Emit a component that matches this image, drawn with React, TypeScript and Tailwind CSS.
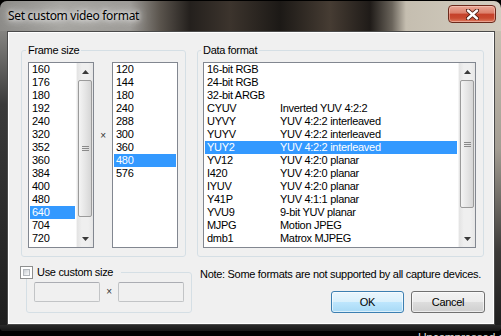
import React from 'react';

const widths = ['160', '176', '180', '192', '240', '320', '352', '360', '384', '400', '480', '640', '704', '720'];
const heights = ['120', '144', '180', '240', '288', '300', '360', '480', '576'];
const formats: [string, string][] = [
  ['16-bit RGB', ''],
  ['24-bit RGB', ''],
  ['32-bit ARGB', ''],
  ['CYUV', 'Inverted YUV 4:2:2'],
  ['UYVY', 'YUV 4:2:2 interleaved'],
  ['YUYV', 'YUV 4:2:2 interleaved'],
  ['YUY2', 'YUV 4:2:2 interleaved'],
  ['YV12', 'YUV 4:2:0 planar'],
  ['I420', 'YUV 4:2:0 planar'],
  ['IYUV', 'YUV 4:2:0 planar'],
  ['Y41P', 'YUV 4:1:1 planar'],
  ['YVU9', '9-bit YUV planar'],
  ['MJPG', 'Motion JPEG'],
  ['dmb1', 'Matrox MJPEG'],
];

function Arrow({ down }: { down?: boolean }) {
  return (
    <div className="h-[17px] flex items-center justify-center">
      <svg width="7" height="4" viewBox="0 0 7 4">
        {down ? (
          <polygon points="0,0 7,0 3.5,4" fill="#3a3a3a" />
        ) : (
          <polygon points="3.5,0 7,4 0,4" fill="#3a3a3a" />
        )}
      </svg>
    </div>
  );
}

function ScrollBar({ thumb }: { thumb: number }) {
  return (
    <div className="w-[17px] flex flex-col bg-[linear-gradient(to_right,#e3e3e3,#efefef_30%,#efefef_70%,#e6e6e6)] border-l border-[#f4f4f4]">
      <Arrow />
      <div className="flex-1 px-[1px]">
        <div
          className="rounded-[2px] border border-[#9b9b9b] bg-[linear-gradient(to_right,#f4f4f4,#e6e6e6_50%,#d6d6d6)] flex flex-col items-center justify-center gap-[1px]"
          style={{ height: thumb }}
        >
          <div className="w-[7px] h-[1px] bg-[#8a8a8a]" />
          <div className="w-[7px] h-[1px] bg-[#8a8a8a]" />
          <div className="w-[7px] h-[1px] bg-[#8a8a8a]" />
        </div>
      </div>
      <Arrow down />
    </div>
  );
}

function Row({ children, selected }: { children: React.ReactNode; selected?: boolean }) {
  return (
    <div
      className={
        'h-[13px] leading-[13px] pl-[2px] whitespace-nowrap flex ' +
        (selected ? 'bg-[#3399ff] text-white' : 'text-black')
      }
    >
      {children}
    </div>
  );
}

function Check() {
  return (
    <div className="w-[13px] h-[13px] border border-[#8e8f8f] bg-white p-[2px]">
      <div className="w-full h-full border border-[#b4b8bd] bg-[linear-gradient(135deg,#c9cdd2,#eceef0_70%,#f8f8f8)]" />
    </div>
  );
}

function Edit() {
  return (
    <div className="w-[66px] h-[20px] rounded-[2px] border border-[#c2c4c6] border-t-[#abadb3] bg-[#f0f0f0]" />
  );
}

function Times() {
  return <span className="text-[10px] leading-none text-[#333]">×</span>;
}

export default function App() {
  return (
    <div className="w-[501px] h-[336px] bg-black overflow-hidden flex flex-col font-['Liberation_Sans',Arial,sans-serif] text-[11px] tracking-[-0.3px]">
      <div className="mt-[1px] h-[330px] shrink-0 rounded-t-[7px] rounded-b-[4px] overflow-hidden flex flex-col bg-[#202020]">
        {/* Title bar */}
        <div className="h-[30px] shrink-0 flex items-start bg-[linear-gradient(to_right,#8c8b88_0px,#a5a4a0_60px,#9d9b97_130px,#5a544d_160px,#24201d_190px,#3c342d_230px,#1c1916_280px,#463c33_330px,#1f1b18_370px,#6a645b_392px,#c5beb0_406px,#d3cdc0_501px)]">
          <span className="pl-[8px] pt-[7px] text-[12px] leading-[16px] tracking-[-0.3px] text-black font-['Noto_Sans',sans-serif] [text-shadow:0_0_8px_rgba(255,255,255,0.9),0_0_14px_rgba(255,255,255,0.8),0_0_4px_rgba(255,255,255,0.9)]">
            Set custom video format
          </span>
          <div className="ml-auto mt-[4px] mr-[5px] w-[48px] h-[18px] rounded-[4px] border border-[#6b2a1c] bg-[linear-gradient(to_bottom,#eaa796_0%,#dc806b_45%,#c5412a_50%,#c94a30_75%,#dd7a5e_100%)] flex items-center justify-center shadow-[inset_0_0_0_1px_rgba(255,220,210,0.45)]">
            <svg width="13" height="11" viewBox="0 0 13 11">
              <path d="M2 1.5 L11 9.5 M11 1.5 L2 9.5" stroke="#4a1a10" strokeWidth="4.2" strokeLinecap="round" />
              <path d="M2 1.5 L11 9.5 M11 1.5 L2 9.5" stroke="#ffffff" strokeWidth="2.4" strokeLinecap="round" />
            </svg>
          </div>
        </div>

        {/* Frame sides + client */}
        <div className="flex flex-1 min-h-0">
          <div className="w-[7px] bg-[linear-gradient(to_bottom,#858481,#3a3a3a_25%,#1e1e1e)]" />
          <div className="w-[488px] h-[294px] border border-[#4a4a4a] bg-[#f0f0f0] shadow-[inset_1px_1px_0_#ffffff,inset_-1px_-1px_0_#ffffff] flex flex-col pt-[12px] pl-[13px] pr-[9px]">
            {/* Top row */}
            <div className="flex gap-[11px]">
              <fieldset className="w-[165px] border border-[#d5dfe5] rounded-[3px] pl-[6px] pt-[5px] pb-[8px]">
                <legend className="-ml-[2px] px-[2px] leading-[13px] text-black">Frame size</legend>
                <div className="flex">
                  <div className="w-[66px] h-[186px] border border-[#828790] bg-white flex">
                    <div className="flex-1 pl-[1px] pr-[1px]">
                      {widths.map((w) => (
                        <Row key={w} selected={w === '640'}>
                          {w}
                        </Row>
                      ))}
                    </div>
                    <ScrollBar thumb={137} />
                  </div>
                  <div className="w-[18px] flex justify-center pt-[69px]">
                    <Times />
                  </div>
                  <div className="w-[66px] h-[186px] border border-[#828790] bg-white pl-[1px] pr-[1px]">
                    {heights.map((h) => (
                      <Row key={h} selected={h === '480'}>
                        {h}
                      </Row>
                    ))}
                  </div>
                </div>
              </fieldset>
              <fieldset className="w-[287px] border border-[#d5dfe5] rounded-[3px] pl-[5px] pt-[5px] pb-[8px]">
                <legend className="-ml-[2px] px-[2px] leading-[13px] text-black">Data format</legend>
                <div className="w-[273px] h-[186px] border border-[#828790] bg-white flex">
                  <div className="flex-1 pl-[1px] pr-[1px]">
                    {formats.map(([a, b]) => (
                      <Row key={a} selected={a === 'YUY2'}>
                        <span className="w-[73px] shrink-0">{a}</span>
                        <span>{b}</span>
                      </Row>
                    ))}
                  </div>
                  <ScrollBar thumb={128} />
                </div>
              </fieldset>
            </div>

            {/* Bottom row */}
            <div className="flex mt-[9px]">
              <fieldset className="ml-[5px] w-[166px] border border-[#d5dfe5] rounded-[3px] pl-[7px] pt-[3px] pb-[10px]">
                <legend className="-ml-[14px] pr-[8px] flex items-center gap-[4px] h-[13px] leading-[13px] text-black">
                  <Check />
                  <span>Use custom size</span>
                </legend>
                <div className="flex items-center">
                  <Edit />
                  <div className="w-[18px] flex justify-center">
                    <Times />
                  </div>
                  <Edit />
                </div>
              </fieldset>
              <div className="flex-1 ml-[8px] pt-[2px] flex flex-col">
                <div className="leading-[13px] whitespace-nowrap text-black">
                  Note: Some formats are not supported by all capture devices.
                </div>
                <div className="mt-[10px] flex justify-end gap-[7px]">
                  <button className="w-[73px] h-[22px] rounded-[3px] border border-[#3c7fb1] bg-[linear-gradient(to_bottom,#eaf6fd_0%,#d9f0fc_50%,#bee6fd_50%,#a7d9f5_100%)] shadow-[inset_0_0_0_1px_rgba(255,255,255,0.6)] text-black leading-[20px]">
                    OK
                  </button>
                  <button className="w-[74px] h-[22px] rounded-[3px] border border-[#707070] bg-[linear-gradient(to_bottom,#f2f2f2_0%,#ebebeb_50%,#dddddd_50%,#cfcfcf_100%)] shadow-[inset_0_0_0_1px_rgba(255,255,255,0.6)] text-black leading-[20px]">
                    Cancel
                  </button>
                </div>
              </div>
            </div>
          </div>
          <div className="w-[6px] bg-[linear-gradient(to_bottom,#c8c1b3,#a39d93_40%,#3c3a38_75%,#1e1e1e)]" />
        </div>
        <div className="h-[6px] shrink-0 bg-[linear-gradient(to_bottom,#2a2a2a,#161616)]" />
      </div>
      <div className="h-[5px] shrink-0 overflow-hidden pl-[418px]">
        <div className="text-[12px] leading-[12px] text-[#d8d8d8] whitespace-nowrap pt-[1px]">Uncompressed data</div>
      </div>
    </div>
  );
}
